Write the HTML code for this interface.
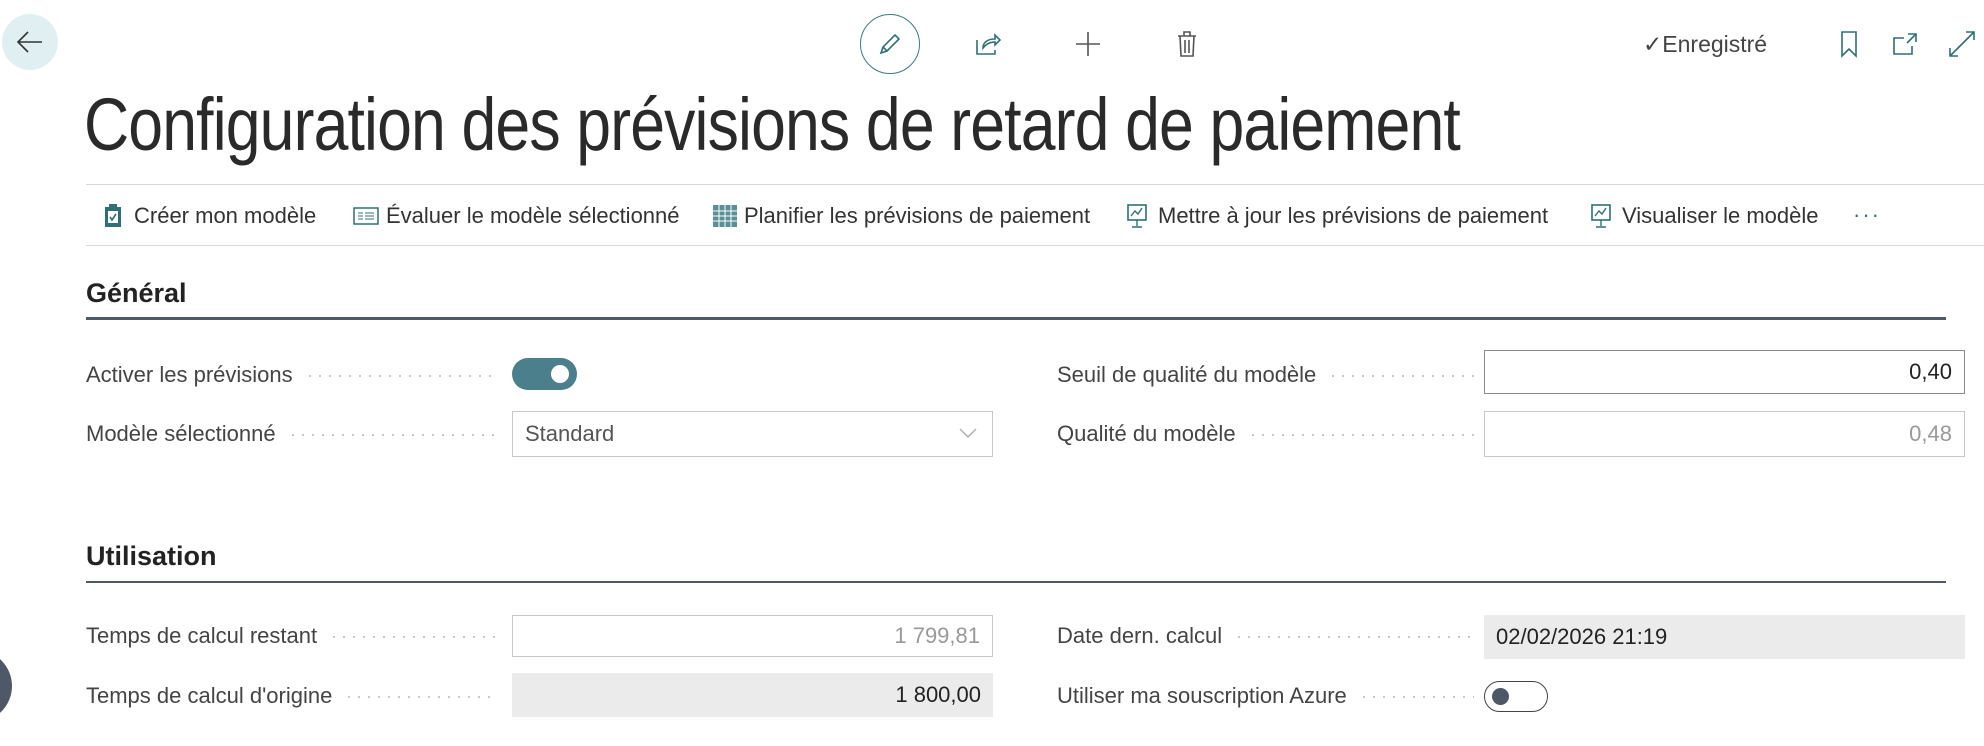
<!DOCTYPE html>
<html><head><meta charset="utf-8"><style>
*{margin:0;padding:0;box-sizing:border-box}
body{width:1984px;height:746px;background:#fff;font-family:"Liberation Sans",sans-serif;color:#333;position:relative;overflow:hidden}
.a{position:absolute}
.lbl{position:absolute;font-size:22px;color:#444;display:flex;align-items:center;height:30px;white-space:nowrap}
.lbl i{flex:1;height:2px;margin:2px 0 0 12px;background:radial-gradient(circle,#c4c4c4 1px,transparent 1.2px) 0 0/10px 2px repeat-x}
.fld{position:absolute;border:1px solid #c8c8c8;font-size:22px;display:flex;align-items:center;padding:0 12px}
.act{position:absolute;top:203px;font-size:22px;color:#333;white-space:nowrap}
.sec{position:absolute;left:86px;font-size:27px;font-weight:bold;color:#222}
</style></head><body>
<div class="a" style="left:2px;top:14px;width:56px;height:56px;border-radius:50%;background:#dfeff2"></div>
<svg class="a" style="left:14px;top:28px" width="32" height="28" viewBox="0 0 32 28"><path d="M28 14H4M14 4L4 14l10 10" fill="none" stroke="#333" stroke-width="1.6"/></svg>
<div class="a" style="left:860px;top:14px;width:60px;height:60px;border-radius:50%;border:1px solid #3e7a80"></div>
<svg class="a" style="left:877px;top:31px" width="26" height="26" viewBox="0 0 26 26"><path d="M4 22l2-6L18 4l4 4L10 20zM6 16l4 4" fill="none" stroke="#2f6f78" stroke-width="1.6"/></svg>
<svg class="a" style="left:975px;top:32px" width="26" height="24" viewBox="0 0 26 24"><path d="M2 8v14h18v-4M8 16c0-6 5-9 12-9V3l5 5-5 5V10c-5 0-9 2-12 6z" fill="none" stroke="#2f6f78" stroke-width="1.6"/></svg>
<svg class="a" style="left:1074px;top:30px" width="28" height="28"><path d="M14 2v24M2 14h24" stroke="#555" stroke-width="1.6"/></svg>
<svg class="a" style="left:1176px;top:30px" width="22" height="28" viewBox="0 0 22 28"><path d="M2 6h18M8 6V2h6v4M4 6l1 20h12l1-20M9 10v13M13 10v13" fill="none" stroke="#555" stroke-width="1.6"/></svg>
<div class="a" style="left:1643px;top:31px;font-size:23px;color:#444">✓Enregistré</div>
<svg class="a" style="left:1840px;top:30px" width="18" height="28"><path d="M2 2h14v24l-7-7-7 7z" fill="none" stroke="#2f6f78" stroke-width="1.6"/></svg>
<svg class="a" style="left:1892px;top:32px" width="26" height="24"><path d="M12 6H2v16h18v-8M16 2h8v8M24 2l-9 9" fill="none" stroke="#2f6f78" stroke-width="1.6"/></svg>
<svg class="a" style="left:1948px;top:30px" width="28" height="28"><path d="M18 2h8v8M26 2L2 26M2 18v8h8" fill="none" stroke="#2f6f78" stroke-width="1.6"/></svg>
<div class="a" style="left:84px;top:82px;font-size:74px;color:#2a2a2a;white-space:nowrap;letter-spacing:-1px;transform:scaleX(0.845);transform-origin:0 0">Configuration des prévisions de retard de paiement</div>
<div class="a" style="left:86px;top:184px;width:1898px;height:1px;background:#d6d6d6"></div>
<div class="a" style="left:86px;top:245px;width:1898px;height:1px;background:#d6d6d6"></div>
<svg class="a" style="left:103px;top:203px" width="20" height="26"><rect x="2" y="4" width="16" height="20" fill="#2f6f78"/><rect x="5" y="8" width="10" height="12" fill="#fff"/><rect x="6" y="1" width="8" height="5" fill="#2f6f78"/><path d="M7 14l2 3 4-6" fill="none" stroke="#2f6f78" stroke-width="1.6"/></svg>
<div class="act" style="left:134px">Créer mon modèle</div>
<svg class="a" style="left:353px;top:207px" width="26" height="18"><rect x="1" y="1" width="24" height="16" fill="none" stroke="#2f6f78" stroke-width="1.5"/><path d="M5 6h5M12 6h9M5 9h5M12 9h9M5 12h5M12 12h9" stroke="#2f6f78"/></svg>
<div class="act" style="left:386px">Évaluer le modèle sélectionné</div>
<svg class="a" style="left:712px;top:204px" width="26" height="24"><rect x="1" y="1" width="24" height="22" fill="#5a8f98"/><path d="M1 7h24M1 12h24M1 17h24M7 1v22M13 1v22M19 1v22" stroke="#fff"/></svg>
<div class="act" style="left:744px">Planifier les prévisions de paiement</div>
<svg class="a" style="left:1126px;top:203px" width="22" height="26"><rect x="2" y="2" width="18" height="15" fill="none" stroke="#2f6f78" stroke-width="1.6"/><path d="M5 13l4-5 3 3 4-6M11 17v6M6 24h10" fill="none" stroke="#2f6f78" stroke-width="1.4"/></svg>
<div class="act" style="left:1158px">Mettre à jour les prévisions de paiement</div>
<svg class="a" style="left:1590px;top:203px" width="22" height="26"><rect x="2" y="2" width="18" height="15" fill="none" stroke="#2f6f78" stroke-width="1.6"/><path d="M5 13l4-5 3 3 4-6M11 17v6M6 24h10" fill="none" stroke="#2f6f78" stroke-width="1.4"/></svg>
<div class="act" style="left:1622px">Visualiser le modèle</div>
<div class="act" style="left:1853px;top:202px;color:#2f6f78;letter-spacing:2px">···</div>

<div class="sec" style="top:278px">Général</div>
<div class="a" style="left:86px;top:317px;width:1860px;height:3px;background:#505a64"></div>
<div class="lbl" style="left:86px;top:360px;width:410px">Activer les prévisions<i></i></div>
<div class="a" style="left:512px;top:358px;width:65px;height:32px;border-radius:16px;background:#4a7f8b"></div>
<div class="a" style="left:551px;top:365px;width:18px;height:18px;border-radius:50%;background:#fff"></div>
<div class="lbl" style="left:86px;top:419px;width:410px">Modèle sélectionné<i></i></div>
<div class="fld" style="left:512px;top:411px;width:481px;height:46px;color:#555">Standard</div>
<svg class="a" style="left:958px;top:426px" width="20" height="14"><path d="M2 3l8 8 8-8" fill="none" stroke="#aaa" stroke-width="1.3"/></svg>
<div class="lbl" style="left:1057px;top:360px;width:417px">Seuil de qualité du modèle<i></i></div>
<div class="fld" style="left:1484px;top:350px;width:481px;height:44px;border-color:#8a8a8a;justify-content:flex-end;color:#222">0,40</div>
<div class="lbl" style="left:1057px;top:419px;width:417px">Qualité du modèle<i></i></div>
<div class="fld" style="left:1484px;top:411px;width:481px;height:46px;justify-content:flex-end;color:#999">0,48</div>

<div class="sec" style="top:541px">Utilisation</div>
<div class="a" style="left:86px;top:581px;width:1860px;height:2px;background:#505a64"></div>
<div class="lbl" style="left:86px;top:621px;width:410px">Temps de calcul restant<i></i></div>
<div class="fld" style="left:512px;top:615px;width:481px;height:42px;justify-content:flex-end;color:#999">1 799,81</div>
<div class="lbl" style="left:86px;top:681px;width:410px">Temps de calcul d'origine<i></i></div>
<div class="fld" style="left:512px;top:673px;width:481px;height:44px;border:none;background:#ebebec;justify-content:flex-end;color:#222">1 800,00</div>
<div class="lbl" style="left:1057px;top:621px;width:417px">Date dern. calcul<i></i></div>
<div class="fld" style="left:1484px;top:615px;width:481px;height:44px;border:none;background:#ebebec;color:#222">02/02/2026 21:19</div>
<div class="lbl" style="left:1057px;top:681px;width:417px">Utiliser ma souscription Azure<i></i></div>
<div class="a" style="left:1484px;top:681px;width:64px;height:31px;border-radius:16px;border:1.5px solid #444"></div>
<div class="a" style="left:1492px;top:688px;width:17px;height:17px;border-radius:50%;background:#4f5868"></div>
<div class="a" style="left:-60px;top:650px;width:72px;height:72px;border-radius:50%;background:#4f5868"></div>
</body></html>
